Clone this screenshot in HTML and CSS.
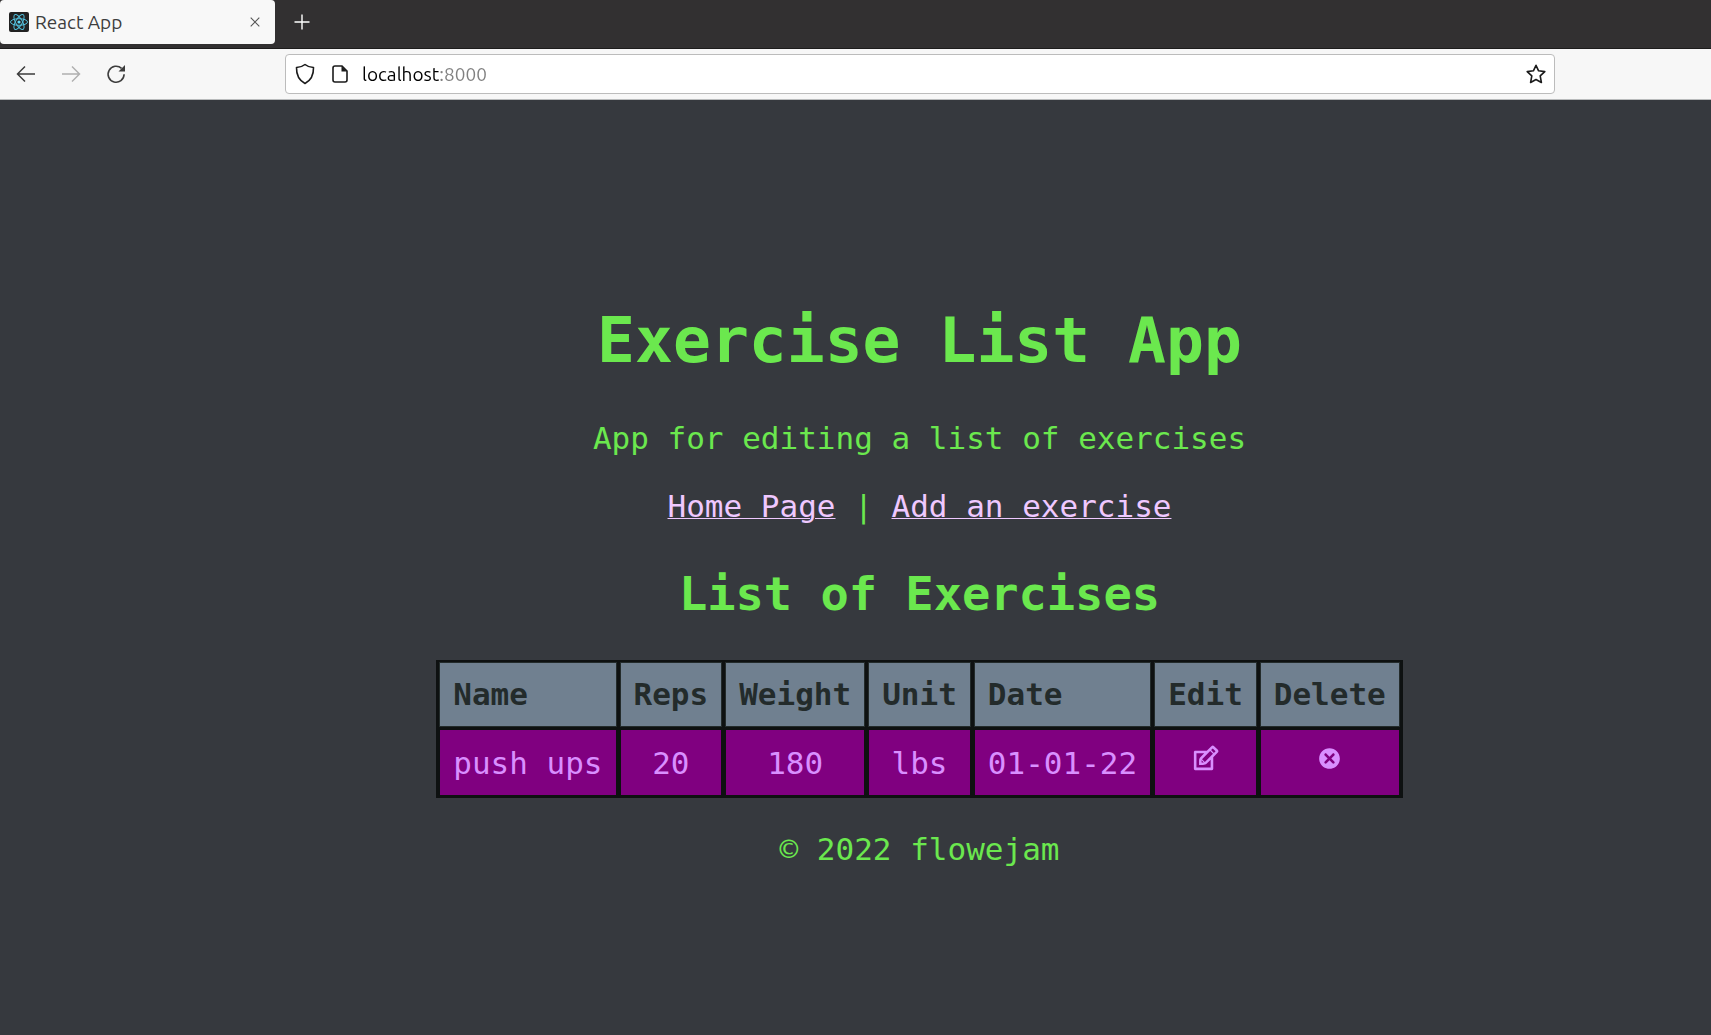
FILE: index.html
```html
<!DOCTYPE html>
<html lang="en">
<head>
<meta charset="utf-8">
<title>React App</title>
<link rel="stylesheet" href="styles.css">
</head>
<body>
<header class="browser">
  <div class="tab-strip">
    <div class="tab">
      <svg class="favicon" viewBox="0 0 20 20" aria-hidden="true">
        <rect width="20" height="20" rx="2" fill="#222"/>
        <g fill="none" stroke="#53c1de" stroke-width="1">
          <ellipse cx="10" cy="10" rx="8.5" ry="3.3"/>
          <ellipse cx="10" cy="10" rx="8.5" ry="3.3" transform="rotate(60 10 10)"/>
          <ellipse cx="10" cy="10" rx="8.5" ry="3.3" transform="rotate(120 10 10)"/>
        </g>
        <circle cx="10" cy="10" r="1.6" fill="#61dafb"/>
      </svg>
      <span class="tab-title">React App</span>
      <button class="icon-button tab-close" type="button" aria-label="Close tab">
        <svg viewBox="0 0 10 10" width="10" height="10"><path d="M.7.7l8.6 8.6M9.3.7L.7 9.3" fill="none" stroke="#555" stroke-width="1.1"/></svg>
      </button>
    </div>
    <button class="icon-button new-tab" type="button" aria-label="New tab">
      <svg viewBox="0 0 16 16" width="16" height="16"><path d="M8 .5v15M.5 8h15" fill="none" stroke="#fff" stroke-width="1.4"/></svg>
    </button>
  </div>
  <div class="toolbar">
    <div class="nav-buttons">
      <button class="icon-button" type="button" aria-label="Back">
        <svg viewBox="0 0 20 20" width="20" height="20"><path d="M19 10H2M9 2.5L1.500 10 9 17.500" fill="none" stroke="#3d3d3d" stroke-width="1.5"/></svg>
      </button>
      <button class="icon-button" type="button" aria-label="Forward">
        <svg viewBox="0 0 20 20" width="20" height="20"><path d="M1 10h17M11 2.500L18.500 10 11 17.500" fill="none" stroke="#b0b0b0" stroke-width="1.5"/></svg>
      </button>
      <button class="icon-button" type="button" aria-label="Reload">
        <svg viewBox="0 0 20 20" width="20" height="20"><path d="M18.100 10.300A8 8 0 1 1 15.600 4.400" fill="none" stroke="#3d3d3d" stroke-width="1.600"/><path d="M19 1v6.500h-6.500z" fill="#3d3d3d"/></svg>
      </button>
    </div>
    <div class="url-bar">
      <svg viewBox="0 0 20 22" width="20" height="22" aria-hidden="true"><path d="M10 1.500C7.500 3.600 4.500 4.300 1.500 4.500 1.300 12 3.500 17 10 20.500 16.500 17 18.700 12 18.500 4.500 15.500 4.300 12.500 3.600 10 1.500z" fill="none" stroke="#1b1b1b" stroke-width="1.600" stroke-linejoin="round"/></svg>
      <svg viewBox="0 0 16 18" width="16" height="18" aria-hidden="true"><path d="M10 1H3a2 2 0 0 0-2 2v12a2 2 0 0 0 2 2h10a2 2 0 0 0 2-2V6z" fill="none" stroke="#1b1b1b" stroke-width="1.600"/><path d="M9.500 1v5.500H15z" fill="#1b1b1b"/></svg>
      <input class="url-input" type="text" aria-label="Address" value="localhost:8000">
      <button class="icon-button" type="button" aria-label="Bookmark this page">
        <svg viewBox="0 0 20 20" width="20" height="20"><path d="M10 1.300l2.600 5.500 6.200.8-4.600 4.300 1.200 6.600L10 15.500l-5.400 3 1.200-6.600L1.200 7.600l6.200-.8z" fill="none" stroke="#1b1b1b" stroke-width="1.600" stroke-linejoin="round"/></svg>
      </button>
    </div>
  </div>
</header>
<main class="app">
  <h1 class="app-title">Exercise List App</h1>
  <p class="tagline">App for editing a list of exercises</p>
  <nav class="app-nav"><a href="#home">Home Page</a> | <a href="#add">Add an exercise</a></nav>
  <h2 class="list-title">List of Exercises</h2>
  <table class="exercises">
    <thead>
      <tr><th class="left">Name</th><th>Reps</th><th>Weight</th><th>Unit</th><th class="left">Date</th><th>Edit</th><th>Delete</th></tr>
    </thead>
    <tbody>
      <tr>
        <td class="left">push ups</td><td>20</td><td>180</td><td>lbs</td><td class="left">01-01-22</td>
        <td><button class="row-action" type="button" aria-label="Edit"><svg viewBox="0 0 24 24" width="31" height="31"><path fill="currentColor" d="M21.561 5.318l-2.879-2.879c-.293-.293-.677-.439-1.061-.439-.385 0-.768.146-1.061.439l-3.560 3.561h-9c-.552 0-1 .447-1 1v13c0 .553.448 1 1 1h13c.552 0 1-.447 1-1v-9l3.561-3.561c.293-.293.439-.677.439-1.061s-.146-.767-.439-1.061zm-10.061 9.354l-2.172-2.172 6.293-6.293 2.172 2.172-6.293 6.293zm-2.561-1.339l1.756 1.728-1.695-.061-.061-1.667zm7.061 5.667h-11v-11h6l-3.180 3.180c-.293.293-.478.812-.629 1.289-.16.5-.191 1.056-.191 1.470v3.061h3.061c.414 0 1.108-.1 1.571-.29.464-.19.896-.347 1.188-.64l3.180-3.070v6zm2.500-11.328l-2.172-2.172 1.293-1.293 2.171 2.172-1.292 1.293z"/></svg></button></td>
        <td><button class="row-action" type="button" aria-label="Delete"><svg viewBox="0 0 24 24" width="31" height="31"><path fill="currentColor" d="M12 4c-4.419 0-8 3.582-8 8s3.581 8 8 8 8-3.582 8-8-3.581-8-8-8zm3.707 10.293c.391.391.391 1.023 0 1.414-.195.195-.451.293-.707.293s-.512-.098-.707-.293l-2.293-2.293-2.293 2.293c-.195.195-.451.293-.707.293s-.512-.098-.707-.293c-.391-.391-.391-1.023 0-1.414l2.293-2.293-2.293-2.293c-.391-.391-.391-1.023 0-1.414s1.023-.391 1.414 0l2.293 2.293 2.293-2.293c.391-.391 1.023-.391 1.414 0s.391 1.023 0 1.414l-2.293 2.293 2.293 2.293z"/></svg></button></td>
      </tr>
    </tbody>
  </table>
  <footer class="app-footer">© 2022 flowejam</footer>
</main>
</body>
</html>
```
FILE: styles.css
```css
* { box-sizing: border-box; }

body {
  margin: 0;
  min-height: 100vh;
  display: flex;
  flex-direction: column;
  background: #36393e;
}

button {
  padding: 0;
  border: 0;
  background: none;
  font: inherit;
  color: inherit;
}

/* Browser frame */
.browser {
  font-family: Ubuntu, "Noto Sans", sans-serif;
  font-size: 19px;
}

.tab-strip {
  display: flex;
  align-items: flex-start;
  height: 49px;
  background: #323031;
  border-bottom: 1px solid #1d1c1c;
}

.tab {
  display: flex;
  align-items: center;
  gap: 6px;
  width: 275px;
  height: 44px;
  padding: 0 15px 0 9px;
  border-radius: 4px;
  background: #f8f8f8;
  color: #3d3d3d;
}

.favicon {
  width: 20px;
  height: 20px;
}

.tab-title { flex: 1; }

.icon-button {
  display: flex;
  align-items: center;
  justify-content: center;
}

.new-tab {
  width: 53px;
  height: 44px;
}

.toolbar {
  display: flex;
  align-items: center;
  height: 51px;
  padding: 0 156px 0 16px;
  background: #f7f7f7;
  border-bottom: 1px solid #b9bbbc;
}

.nav-buttons {
  display: flex;
  gap: 25px;
  width: 269px;
}

.url-bar {
  flex: 1;
  display: flex;
  align-items: center;
  height: 40px;
  padding: 0 8px 0 9px;
  border: 1px solid #bcbcbc;
  border-radius: 4px;
  background: #fff;
}

.url-bar svg + svg { margin-left: 17px; }

.url-input {
  flex: 1;
  min-width: 0;
  height: 30px;
  margin-left: 14px;
  padding: 0;
  border: 0;
  outline: 0;
  font: inherit;
  color: #000;
  /* the port is dimmed after the host name */
  background: linear-gradient(90deg, #000 77px, #808080 77px);
  -webkit-background-clip: text;
  background-clip: text;
  -webkit-text-fill-color: transparent;
}

/* Exercise app */
.app {
  flex: 1;
  display: flex;
  flex-direction: column;
  align-items: center;
  justify-content: center;
  padding-top: 36px;
  padding-left: 128px;
  font-family: "DejaVu Sans Mono", monospace;
  font-size: 31px;
  line-height: 37px;
  color: #6be84e;
  text-align: center;
}

.app-title {
  margin: 0 0 42px;
  font-size: 63px;
  line-height: 74px;
}

.tagline { margin: 0 0 31px; }

.app-nav a { color: #efc8ff; text-decoration-thickness: 1px; }

.list-title {
  margin: 41px 0 39px;
  font-size: 47px;
  line-height: 55px;
}

.exercises {
  border-spacing: 3px 2px;
  background: #0e1111;
}

.exercises th,
.exercises td {
  padding: 13px;
  border: 1px solid #0e1111;
  vertical-align: baseline;
}

.exercises th {
  border-color: #232b2b;
  background: #708090;
  color: #232b2b;
}

.exercises td {
  background: #800080;
  color: #d98fff;
}

.exercises .left { text-align: left; }

.row-action svg { vertical-align: baseline; }

.app-footer { margin-top: 33px; }
```
